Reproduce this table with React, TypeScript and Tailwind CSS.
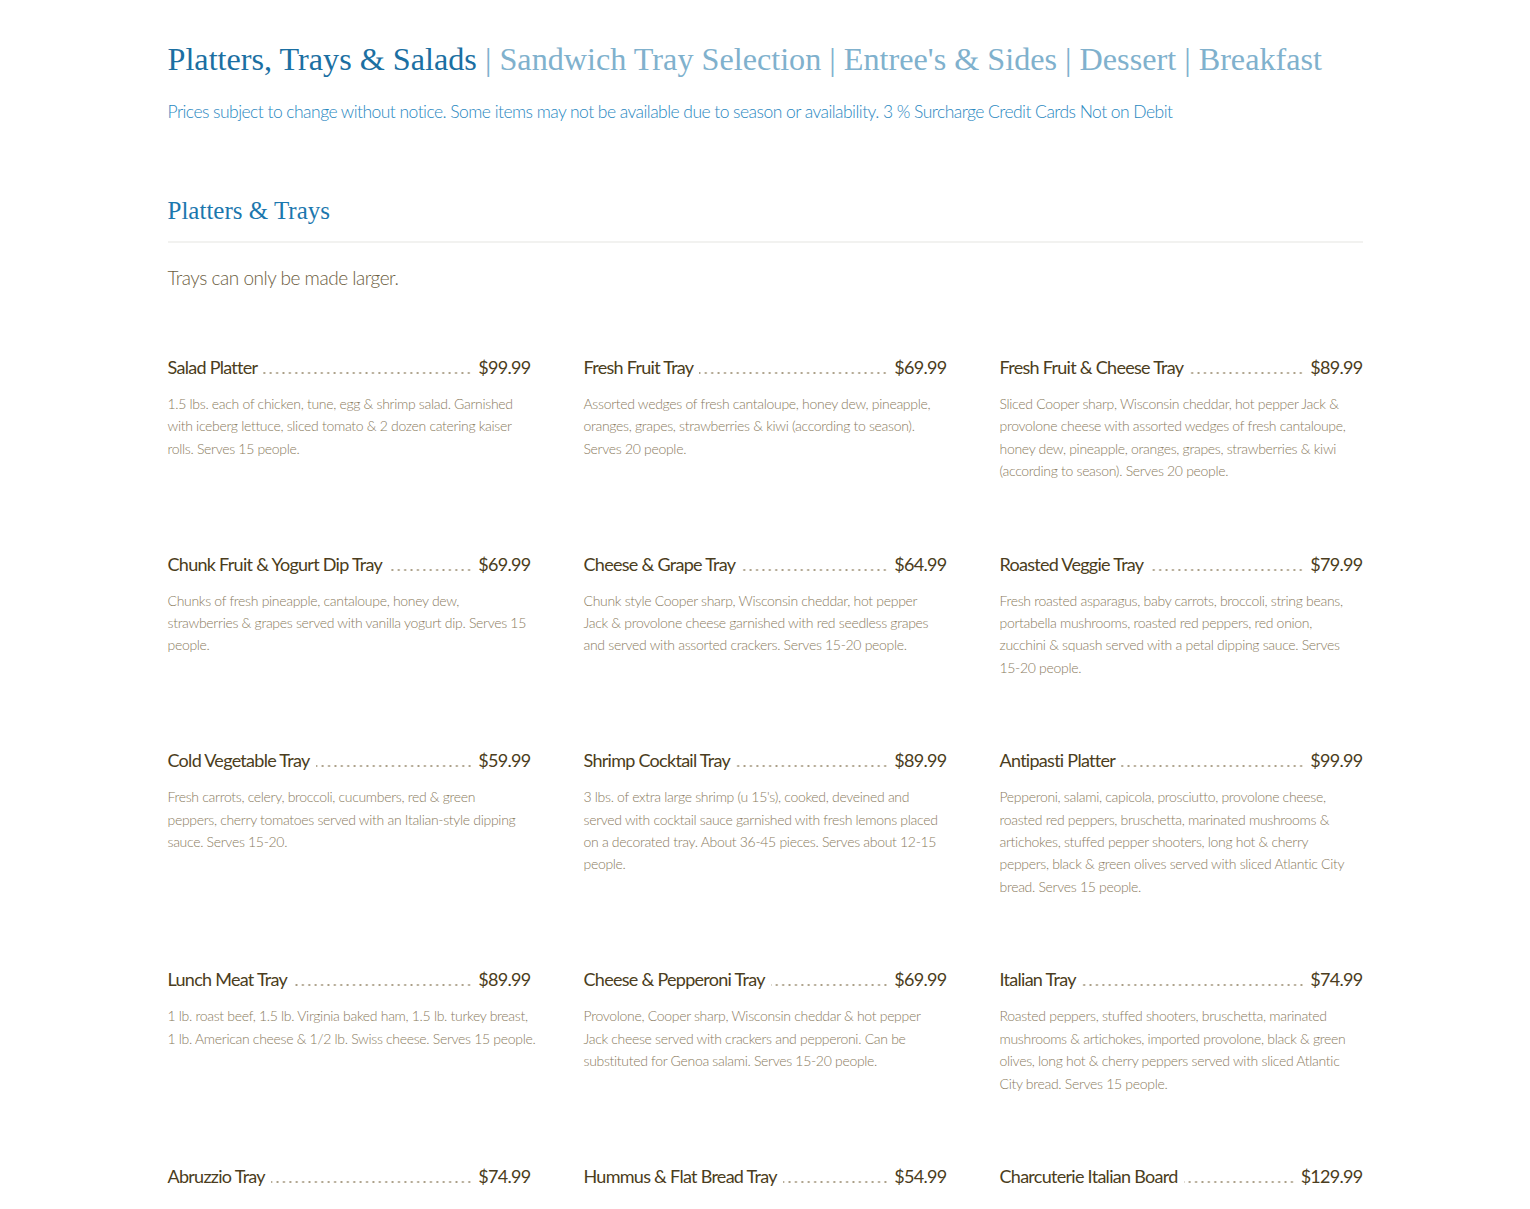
import React from 'react';

interface MenuItem {
  name: string;
  price: string;
  desc?: string[];
}

const ITEMS: MenuItem[] = [
  {
    name: 'Salad Platter',
    price: '$99.99',
    desc: [
      '1.5 lbs. each of chicken, tune, egg & shrimp salad. Garnished',
      'with iceberg lettuce, sliced tomato & 2 dozen catering kaiser',
      'rolls. Serves 15 people.',
    ],
  },
  {
    name: 'Fresh Fruit Tray',
    price: '$69.99',
    desc: [
      'Assorted wedges of fresh cantaloupe, honey dew, pineapple,',
      'oranges, grapes, strawberries & kiwi (according to season).',
      'Serves 20 people.',
    ],
  },
  {
    name: 'Fresh Fruit & Cheese Tray',
    price: '$89.99',
    desc: [
      'Sliced Cooper sharp, Wisconsin cheddar, hot pepper Jack &',
      'provolone cheese with assorted wedges of fresh cantaloupe,',
      'honey dew, pineapple, oranges, grapes, strawberries & kiwi',
      '(according to season). Serves 20 people.',
    ],
  },
  {
    name: 'Chunk Fruit & Yogurt Dip Tray',
    price: '$69.99',
    desc: [
      'Chunks of fresh pineapple, cantaloupe, honey dew,',
      'strawberries & grapes served with vanilla yogurt dip. Serves 15',
      'people.',
    ],
  },
  {
    name: 'Cheese & Grape Tray',
    price: '$64.99',
    desc: [
      'Chunk style Cooper sharp, Wisconsin cheddar, hot pepper',
      'Jack & provolone cheese garnished with red seedless grapes',
      'and served with assorted crackers. Serves 15-20 people.',
    ],
  },
  {
    name: 'Roasted Veggie Tray',
    price: '$79.99',
    desc: [
      'Fresh roasted asparagus, baby carrots, broccoli, string beans,',
      'portabella mushrooms, roasted red peppers, red onion,',
      'zucchini & squash served with a petal dipping sauce. Serves',
      '15-20 people.',
    ],
  },
  {
    name: 'Cold Vegetable Tray',
    price: '$59.99',
    desc: [
      'Fresh carrots, celery, broccoli, cucumbers, red & green',
      'peppers, cherry tomatoes served with an Italian-style dipping',
      'sauce. Serves 15-20.',
    ],
  },
  {
    name: 'Shrimp Cocktail Tray',
    price: '$89.99',
    desc: [
      "3 lbs. of extra large shrimp (u 15's), cooked, deveined and",
      'served with cocktail sauce garnished with fresh lemons placed',
      'on a decorated tray. About 36-45 pieces. Serves about 12-15',
      'people.',
    ],
  },
  {
    name: 'Antipasti Platter',
    price: '$99.99',
    desc: [
      'Pepperoni, salami, capicola, prosciutto, provolone cheese,',
      'roasted red peppers, bruschetta, marinated mushrooms &',
      'artichokes, stuffed pepper shooters, long hot & cherry',
      'peppers, black & green olives served with sliced Atlantic City',
      'bread. Serves 15 people.',
    ],
  },
  {
    name: 'Lunch Meat Tray',
    price: '$89.99',
    desc: [
      '1 lb. roast beef, 1.5 lb. Virginia baked ham, 1.5 lb. turkey breast,',
      '1 lb. American cheese & 1/2 lb. Swiss cheese. Serves 15 people.',
    ],
  },
  {
    name: 'Cheese & Pepperoni Tray',
    price: '$69.99',
    desc: [
      'Provolone, Cooper sharp, Wisconsin cheddar & hot pepper',
      'Jack cheese served with crackers and pepperoni. Can be',
      'substituted for Genoa salami. Serves 15-20 people.',
    ],
  },
  {
    name: 'Italian Tray',
    price: '$74.99',
    desc: [
      'Roasted peppers, stuffed shooters, bruschetta, marinated',
      'mushrooms & artichokes, imported provolone, black & green',
      'olives, long hot & cherry peppers served with sliced Atlantic',
      'City bread. Serves 15 people.',
    ],
  },
  { name: 'Abruzzio Tray', price: '$74.99' },
  { name: 'Hummus & Flat Bread Tray', price: '$54.99' },
  { name: 'Charcuterie Italian Board', price: '$129.99' },
];

const NAV = ['Sandwich Tray Selection', "Entree's & Sides", 'Dessert', 'Breakfast'];

const MenuCard: React.FC<{ item: MenuItem }> = ({ item }) => (
  <div>
    <div className="flex items-baseline text-[18px] leading-[28px] tracking-[-0.04em] text-[#4b3d20]">
      <span className="whitespace-nowrap">{item.name}</span>
      {/* dotted leader */}
      <span className="mx-[6px] h-[4px] flex-1 self-end mb-[6px] bg-[radial-gradient(circle,#a99d85_0.9px,transparent_1.2px)] bg-[length:6.4px_4px] bg-repeat-x bg-right" />
      <span className="whitespace-nowrap">{item.price}</span>
    </div>
    {item.desc && (
      <p className="mt-[12px] text-[14px] leading-[22.4px] font-light tracking-[-0.022em] text-[#8a7b5e]">
        {item.desc.map((line, i) => (
          <span key={i} className="block whitespace-nowrap">
            {line}
          </span>
        ))}
      </p>
    )}
  </div>
);

export default function App() {
  return (
    <div className="min-h-screen bg-white font-['Lato','Liberation_Sans',sans-serif]">
      <div className="mx-auto w-[1195px] pt-[39px] pb-16">
        <h1 className="font-['Liberation_Serif','Times_New_Roman',serif] text-[32.2px] leading-[40px] whitespace-nowrap text-[#80b1cd]">
          <span className="text-[#1b6fa2]">Platters, Trays &amp; Salads</span>
          {NAV.map((n) => (
            <span key={n}>
              {' | '}
              {n}
            </span>
          ))}
        </h1>

        <p className="mt-[21px] text-[17.5px] leading-[24px] font-light tracking-[-0.031em] text-[#2a88bf]">
          Prices subject to change without notice. Some items may not be available due to season or availability. 3 % Surcharge Credit Cards Not on Debit
        </p>

        <h2 className="mt-[71px] font-['Liberation_Serif','Times_New_Roman',serif] text-[25px] leading-[32px] text-[#1b77ae]">
          Platters &amp; Trays
        </h2>
        <div className="mt-[14px] h-[2px] bg-[#f2f2f0]" />

        <p className="mt-[21px] text-[19px] leading-[28px] font-light tracking-[-0.025em] text-[#6c5e42]">
          Trays can only be made larger.
        </p>

        <div className="mt-[61px] grid grid-cols-3 gap-x-[53px] gap-y-[67px]">
          {ITEMS.map((item) => (
            <MenuCard key={item.name} item={item} />
          ))}
        </div>
      </div>
    </div>
  );
}
